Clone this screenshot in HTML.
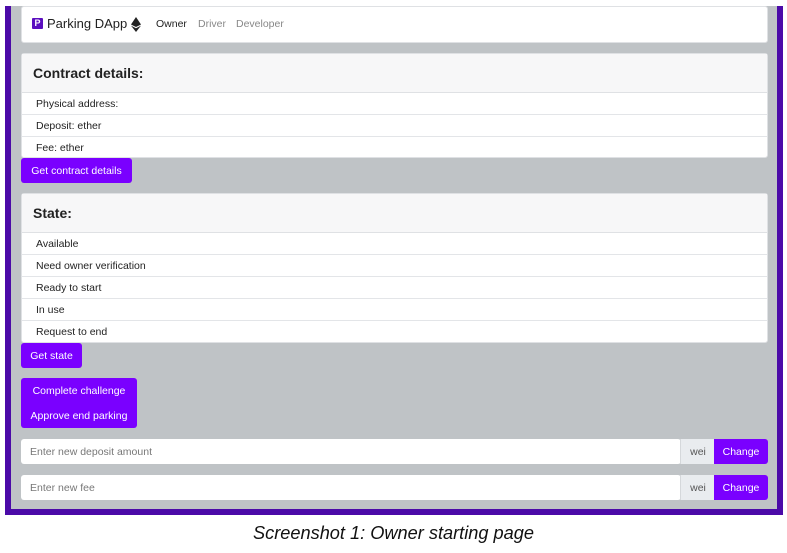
<!DOCTYPE html>
<html><head><style>
body{margin:0;width:787px;height:553px;background:#fff;position:relative;font-family:"Liberation Sans",sans-serif;overflow:hidden}
.a{position:absolute}
.frame{left:5px;top:6px;width:766px;height:503px;background:#bfc3c6;border:6px solid #4b0aa8;border-top:none}
.card{background:#fff;border:1px solid #dfe1e4;border-radius:3px;box-sizing:border-box}
.hd{background:#f7f7f8;border-bottom:1px solid #dfe1e4;font-size:14px;font-weight:bold;color:#222;padding-left:11px;box-sizing:border-box;line-height:39px;height:39px}
.row{height:22px;line-height:22px;font-size:10.5px;color:#222;padding-left:14px;border-bottom:1px solid #e3e5e8;box-sizing:border-box}
.row:last-child{border-bottom:none}
.btn{background:#7a00ff;color:#fff;font-size:10.5px;border-radius:3px;text-align:center}
.inp{background:#fff;border-radius:3px;font-size:10.5px;color:#777;line-height:26px;padding-left:9px;box-sizing:border-box}
.wei{background:#e9ecef;color:#555;font-size:10.5px;text-align:center;line-height:26px;border-left:1px solid #d5d8db}
</style></head><body>
<div class="a frame"></div>
<div class="a card" style="left:21px;top:6px;width:747px;height:37px"></div>
<div class="a" style="left:32px;top:18px;width:11px;height:11px;background:#5b0fbf;border-radius:1px;color:#fff;font-size:9px;font-weight:bold;text-align:center;line-height:11px">P</div>
<div class="a" style="left:47px;top:16px;font-size:13px;color:#222">Parking DApp</div>
<svg class="a" style="left:131px;top:17px" width="10" height="15" viewBox="0 0 10 15"><path d="M5 0L0 7.5 5 10 10 7.5Z M0 8.6L5 15 10 8.6 5 11.2Z" fill="#222"/></svg>
<div class="a" style="left:156px;top:18px;font-size:10.5px;color:#222">Owner</div>
<div class="a" style="left:198px;top:18px;font-size:10.5px;color:#888">Driver</div>
<div class="a" style="left:236px;top:18px;font-size:10.5px;color:#888">Developer</div>

<div class="a card" style="left:21px;top:53px;width:747px;height:105px">
<div class="hd">Contract details:</div>
<div class="row">Physical address:</div><div class="row">Deposit: ether</div><div class="row">Fee: ether</div>
</div>
<div class="a btn" style="left:21px;top:158px;width:111px;height:25px;line-height:26px">Get contract details</div>

<div class="a card" style="left:21px;top:193px;width:747px;height:150px">
<div class="hd">State:</div>
<div class="row">Available</div><div class="row">Need owner verification</div><div class="row">Ready to start</div><div class="row">In use</div><div class="row">Request to end</div>
</div>
<div class="a btn" style="left:21px;top:343px;width:61px;height:25px;line-height:26px">Get state</div>

<div class="a btn" style="left:21px;top:378px;width:116px;height:50px">
<div style="line-height:26px">Complete challenge</div><div style="line-height:24px">Approve end parking</div></div>

<div class="a inp" style="left:21px;top:439px;width:660px;height:25px">Enter new deposit amount</div>
<div class="a wei" style="left:680px;top:439px;width:34px;height:25px">wei</div>
<div class="a btn" style="left:714px;top:439px;width:54px;height:25px;line-height:26px;border-radius:0 3px 3px 0">Change</div>
<div class="a inp" style="left:21px;top:475px;width:660px;height:25px">Enter new fee</div>
<div class="a wei" style="left:680px;top:475px;width:34px;height:25px">wei</div>
<div class="a btn" style="left:714px;top:475px;width:54px;height:25px;line-height:26px;border-radius:0 3px 3px 0">Change</div>

<div class="a" style="left:0;width:787px;top:523px;text-align:center;font-style:italic;font-size:18.2px;color:#111">Screenshot 1: Owner starting page</div>
</body></html>
